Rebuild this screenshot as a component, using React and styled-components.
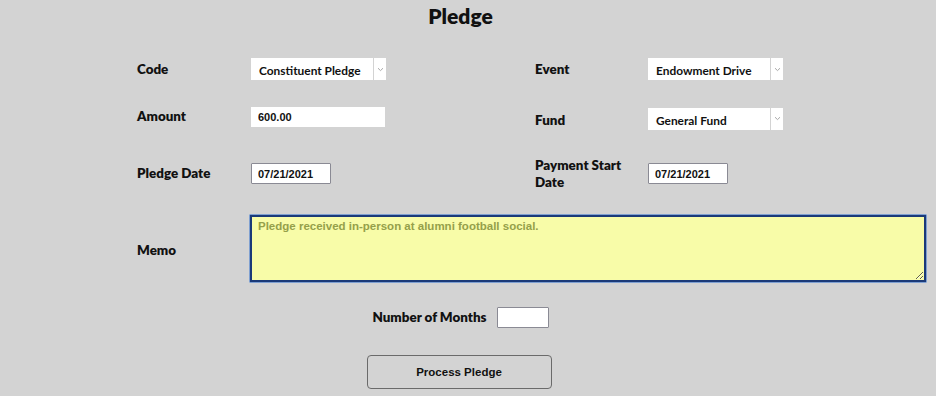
import React from "react";
import styled, { createGlobalStyle } from "styled-components";

const GlobalStyle = createGlobalStyle`
  html, body {
    margin: 0;
    padding: 0;
    background: #d3d3d3;
  }
  body {
    width: 936px;
    height: 396px;
    overflow: hidden;
  }
`;

export default function App() {
  return (
    <>
      <GlobalStyle />
      <Page>
        <Title>Pledge</Title>
        <FormGrid>
          <Label>Code</Label>
          <Field>
            <Select value="Constituent Pledge" />
          </Field>
          <Label>Event</Label>
          <Field>
            <Select value="Endowment Drive" />
          </Field>

          <Label offset={-2}>Amount</Label>
          <Field>
            <TextInput defaultValue="600.00" />
          </Field>
          <Label offset={2}>Fund</Label>
          <Field>
            <Select value="General Fund" />
          </Field>

          <Label>Pledge Date</Label>
          <Field>
            <DateInput defaultValue="07/21/2021" />
          </Field>
          <Label>
            Payment Start
            <br />
            Date
          </Label>
          <Field>
            <DateInput defaultValue="07/21/2021" />
          </Field>
        </FormGrid>

        <MemoRow>
          <Label offset={2}>Memo</Label>
          <Memo defaultValue="Pledge received in-person at alumni football social." />
        </MemoRow>

        <MonthsRow>
          <Label>Number of Months</Label>
          <SmallInput />
        </MonthsRow>

        <ButtonRow>
          <Button type="button">Process Pledge</Button>
        </ButtonRow>
      </Page>
    </>
  );
}

function Select({ value }) {
  return (
    <SelectBox>
      <SelectValue>{value}</SelectValue>
      <Arrow>
        <svg width="7" height="5" viewBox="0 0 7 5">
          <path d="M1 1.2 L3.5 3.6 L6 1.2" fill="none" stroke="#a8a8a8" strokeWidth="1" />
        </svg>
      </Arrow>
    </SelectBox>
  );
}

const Page = styled.div`
  width: 936px;
  height: 396px;
  background: #d3d3d3;
  font-family: "Lato", "DejaVu Sans", sans-serif;
  color: #111;
`;

const Title = styled.h1`
  margin: 0;
  padding: 5px 15px 0 0;
  height: 58px;
  box-sizing: border-box;
  text-align: center;
  font-size: 21px;
  font-weight: 800;
  line-height: 22px;
  color: #111;
`;

const FormGrid = styled.div`
  display: grid;
  grid-template-columns: 114px 284px 113px 160px;
  grid-template-rows: 22px 23px 33px;
  row-gap: 27px;
  padding-left: 137px;
  align-items: center;
`;

const Label = styled.div`
  font-size: 13.4px;
  font-weight: 800;
  line-height: 17px;
  color: #111;
  position: relative;
  top: ${(p) => p.offset || 0}px;
`;

const Field = styled.div`
  display: flex;
  align-items: center;
`;

const SelectBox = styled.div`
  display: flex;
  width: 135px;
  height: 22px;
  gap: 1px;
`;

const SelectValue = styled.div`
  flex: 1;
  background: #fff;
  font-family: "Lato", "DejaVu Sans", sans-serif;
  font-weight: 700;
  font-size: 11.9px;
  line-height: 22px;
  padding: 2px 0 0 8px;
  box-sizing: border-box;
  color: #111;
`;

const Arrow = styled.div`
  width: 12px;
  background: #fff;
  display: flex;
  align-items: center;
  justify-content: center;
`;

const TextInput = styled.input`
  width: 134px;
  height: 20px;
  margin-top: -3px;
  border: none;
  outline: none;
  padding: 0 0 0 7px;
  box-sizing: border-box;
  background: #fff;
  font-family: "Liberation Sans", Arial, sans-serif;
  font-weight: 700;
  font-size: 11px;
  color: #111;
`;

const DateInput = styled.input`
  width: 80px;
  height: 21px;
  border: 1px solid #8a8a94;
  border-radius: 1px;
  outline: none;
  padding: 0 0 0 6px;
  box-sizing: border-box;
  background: #fff;
  font-family: "Liberation Sans", Arial, sans-serif;
  font-weight: 700;
  font-size: 11px;
  color: #111;
`;

const MemoRow = styled.div`
  display: grid;
  grid-template-columns: 113px 676px;
  align-items: center;
  padding-left: 137px;
  margin-top: 25px;
`;

const Memo = styled.textarea`
  width: 676px;
  height: 67px;
  margin: 0;
  border: 2px solid #1b3a78;
  box-shadow: 0 0 0 0.5px #2d6fd0;
  outline: none;
  padding: 3px 6px;
  box-sizing: border-box;
  background: #f8fca8;
  font-family: "Liberation Sans", Arial, sans-serif;
  font-weight: 700;
  font-size: 11.5px;
  color: #95a04a;
  resize: both;
  display: block;
`;

const MonthsRow = styled.div`
  display: flex;
  justify-content: center;
  align-items: center;
  gap: 10px;
  margin-top: 25px;
  margin-left: -15px;
`;

const SmallInput = styled.input`
  width: 52px;
  height: 21px;
  border: 1px solid #8a8a94;
  border-radius: 1px;
  outline: none;
  box-sizing: border-box;
  background: #fff;
`;

const ButtonRow = styled.div`
  display: flex;
  justify-content: center;
  margin-top: 27px;
  margin-left: -18px;
`;

const Button = styled.button`
  width: 185px;
  height: 34px;
  border: 1px solid #6a6a6a;
  border-radius: 4px;
  background: #d3d3d3;
  font-family: "Liberation Sans", Arial, sans-serif;
  font-weight: 700;
  font-size: 11.5px;
  color: #111;
  cursor: pointer;
`;
